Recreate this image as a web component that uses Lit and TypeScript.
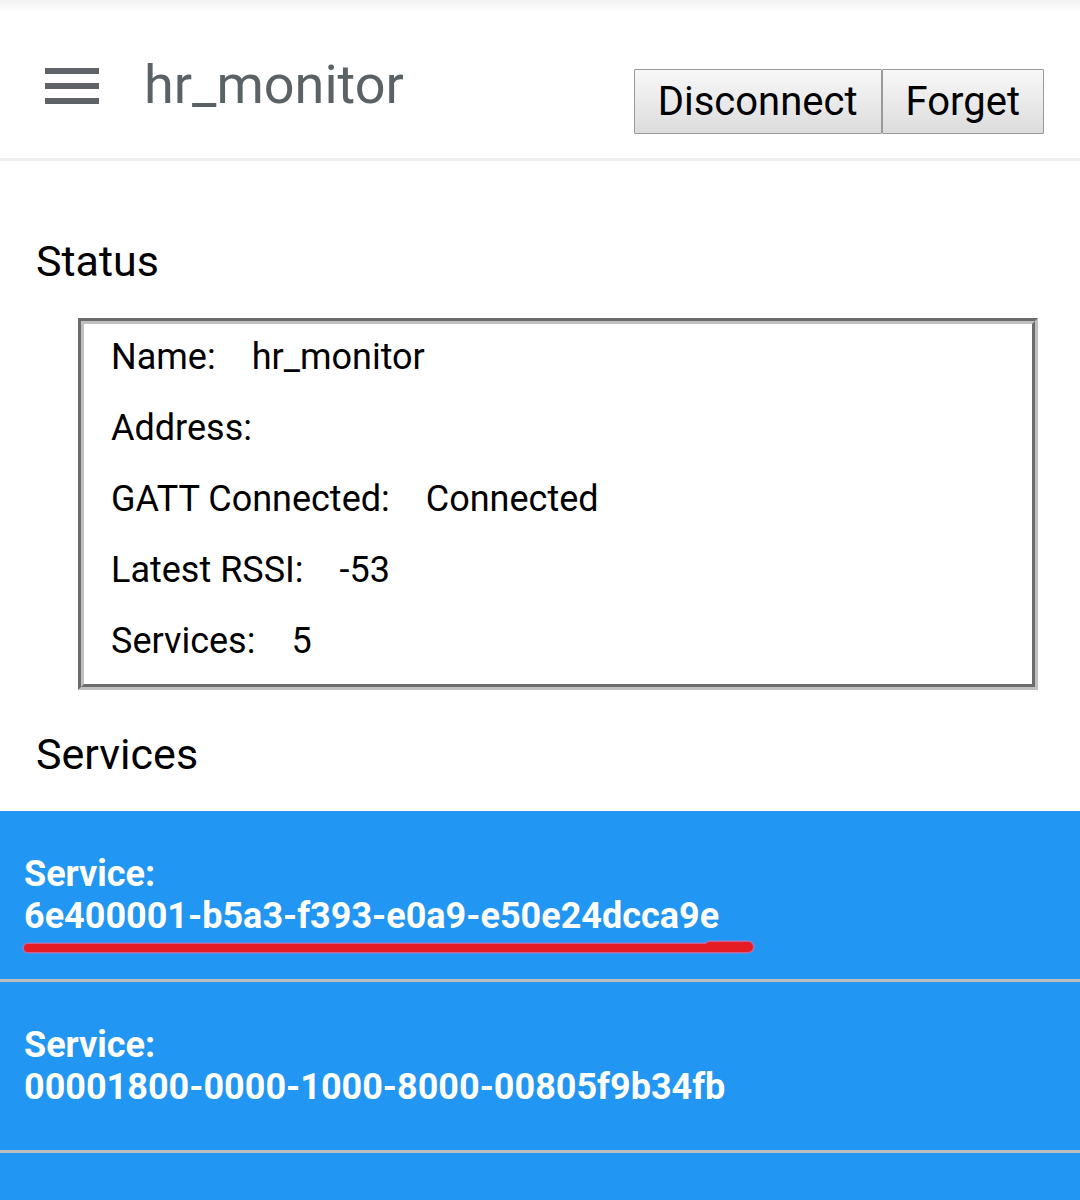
import { LitElement, html, css, svg } from "lit";
import { customElement, state } from "lit/decorators.js";

interface StatusItem {
  label: string;
  value: string;
}

@customElement("app-root")
export class AppRoot extends LitElement {
  static styles = css`
    :host {
      display: block;
      height: 100vh;
      overflow: hidden;
      background: #fff;
      color: #000;
      font-family: Roboto, "Liberation Sans", sans-serif;
    }
    * {
      box-sizing: border-box;
    }
    .header {
      display: flex;
      justify-content: space-between;
      align-items: flex-start;
      height: 161px;
      padding: 0 36px;
      border-bottom: 3px solid #eee;
      background: linear-gradient(#f2f2f2, #fff 12px);
    }
    .brand {
      display: flex;
      align-items: flex-start;
      gap: 36px;
      padding-top: 50px;
    }
    .menu {
      display: flex;
      padding: 0;
      border: 0;
      background: none;
      color: #5f6368;
    }
    .menu svg {
      width: 72px;
      height: 72px;
    }
    .title {
      margin: 0;
      font-size: 54px;
      line-height: 70px;
      font-weight: 400;
      color: #5b6266;
    }
    .actions {
      display: flex;
      padding-top: 69px;
    }
    .action {
      height: 65px;
      padding: 0 23px;
      border: 1px solid #999;
      border-radius: 1px;
      background: linear-gradient(#f8f8f8, #dcdcdc);
      font: 400 40px/62px Roboto, "Liberation Sans", sans-serif;
      color: #000;
    }
    .heading {
      margin: 0;
      padding: 0 36px;
      font-size: 43px;
      line-height: 50px;
      font-weight: 400;
    }
    .status {
      padding-top: 75px;
    }
    .panel {
      margin: 32px 42px 0 78px;
      padding: 0 27px 5px;
      border: 6px groove #c0c0c0;
    }
    .row {
      display: flex;
      gap: 36px;
      font-size: 36px;
      line-height: 42px;
      padding: 12px 0 17px;
    }
    .row dd {
      margin: 0;
    }
    .services {
      padding-top: 39px;
    }
    .list {
      margin: 32px 0 0;
      padding: 0;
      list-style: none;
    }
    .service {
      height: 171px;
      padding: 42px 24px;
      border-bottom: 3px solid #bdbdbd;
      background: #2196f3;
      color: #fff;
      font-size: 36px;
      line-height: 42px;
      font-weight: 700;
    }
    .uuid {
      position: relative;
      display: block;
    }
    .mark {
      position: absolute;
      left: -4px;
      top: 40px;
      width: 738px;
      height: 24px;
    }
  `;

  @state() private items: StatusItem[] = [
    { label: "Name:", value: "hr_monitor" },
    { label: "Address:", value: "" },
    { label: "GATT Connected:", value: "Connected" },
    { label: "Latest RSSI:", value: "-53" },
    { label: "Services:", value: "5" },
  ];

  @state() private services = [
    "6e400001-b5a3-f393-e0a9-e50e24dcca9e",
    "00001800-0000-1000-8000-00805f9b34fb",
    "",
  ];

  private underline() {
    return html`<svg class="mark" viewBox="0 0 738 24" aria-hidden="true">
      ${svg`<g fill="none" stroke-linecap="round">
        <g stroke="#8a86d2">
          <path d="M8 13H688" stroke-width="12" stroke-opacity="0.6" />
          <path d="M690 12H728" stroke-width="14" stroke-opacity="0.6" />
        </g>
        <g stroke="#c8609a">
          <path d="M8 13H688" stroke-width="10" />
          <path d="M690 12H728" stroke-width="12" />
        </g>
        <path d="M8 13H688" stroke="#e51c23" stroke-width="8" />
        <path d="M690 12H728" stroke="#e51c23" stroke-width="10" />
      </g>`}
    </svg>`;
  }

  render() {
    return html`
      <header class="header">
        <div class="brand">
          <button class="menu" aria-label="Menu">
            <svg viewBox="0 0 24 24" fill="currentColor" aria-hidden="true">
              <path d="M3 18h18v-2H3v2zm0-5h18v-2H3v2zm0-7v2h18V6H3z" />
            </svg>
          </button>
          <h1 class="title">hr_monitor</h1>
        </div>
        <div class="actions">
          <button class="action">Disconnect</button>
          <button class="action">Forget</button>
        </div>
      </header>
      <main>
        <section class="status">
          <h2 class="heading">Status</h2>
          <dl class="panel">
            ${this.items.map(
              (i) => html`<div class="row"><dt>${i.label}</dt><dd>${i.value}</dd></div>`
            )}
          </dl>
        </section>
        <section class="services">
          <h2 class="heading">Services</h2>
          <ul class="list">
            ${this.services.map(
              (id, n) => html`<li class="service">
                ${id ? html`Service:<span class="uuid">${id}${n === 0 ? this.underline() : ""}</span>` : ""}
              </li>`
            )}
          </ul>
        </section>
      </main>
    `;
  }
}
